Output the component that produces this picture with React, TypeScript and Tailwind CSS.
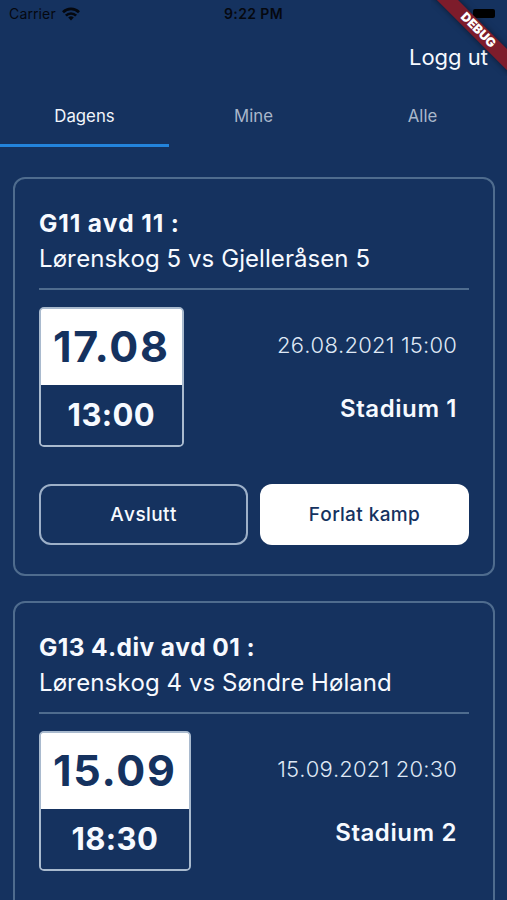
interface Match {
  id: number;
  league: string;
  leagueTracking: string;
  teams: string;
  day: string;
  meetTime: string;
  kickoff: string;
  arena: string;
}

const matches: Match[] = [
  {
    id: 1,
    league: "G11 avd 11 :",
    leagueTracking: "tracking-[0.85px]",
    teams: "Lørenskog 5 vs Gjelleråsen 5",
    day: "17.08",
    meetTime: "13:00",
    kickoff: "26.08.2021 15:00",
    arena: "Stadium 1",
  },
  {
    id: 2,
    league: "G13 4.div avd 01 :",
    leagueTracking: "tracking-[0.38px]",
    teams: "Lørenskog 4 vs Søndre Høland",
    day: "15.09",
    meetTime: "18:30",
    kickoff: "15.09.2021 20:30",
    arena: "Stadium 2",
  },
];

const tabs = ["Dagens", "Mine", "Alle"];

function WifiIcon() {
  return (
    <svg width="18" height="14" viewBox="0 0 18 14" fill="none">
      <g stroke="#05080f" strokeWidth="2.7">
        <path d="M1 5.2a11.4 11.4 0 0 1 16 0" />
        <path d="M3.9 8.6a7.2 7.2 0 0 1 10.2 0" />
      </g>
      <path d="M6.2 10.6a4 4 0 0 1 5.6 0L9 13.4Z" fill="#05080f" />
    </svg>
  );
}

function StatusBar() {
  return (
    <div className="grid h-[27px] shrink-0 grid-cols-3 items-center px-[9px] text-[#05080f]">
      <div className="flex items-center gap-[6px]">
        <span className="text-[14px] tracking-[0.2px]">Carrier</span>
        <WifiIcon />
      </div>
      <span className="text-center text-[14px] font-semibold tracking-[0.4px]">
        9:22 PM
      </span>
      <div className="mr-[3px] h-[9px] w-[22px] justify-self-end rounded-[2px] bg-black" />
    </div>
  );
}

function DebugBanner() {
  return (
    <div className="pointer-events-none absolute top-0 right-0 h-[76px] w-[76px] overflow-hidden">
      <div className="absolute top-[22.5px] left-[-13px] flex h-[14.7px] w-[120px] rotate-45 items-center justify-center bg-[#7d1c2b] text-[12.5px] font-black text-white shadow-[0_0_6px_rgba(0,0,0,0.5)]">
        DEBUG
      </div>
    </div>
  );
}

function Tabs() {
  return (
    <nav className="grid shrink-0 grid-cols-3">
      {tabs.map((tab, i) => (
        <button
          key={tab}
          className={
            i === 0
              ? "h-[60px] border-b-[3px] border-[#2384dc] pt-[3px] text-[16.8px] text-[#f1f5fb]"
              : "h-[60px] border-b-[3px] border-transparent pt-[3px] text-[16.8px] text-[#a9b7cb]"
          }
        >
          {tab}
        </button>
      ))}
    </nav>
  );
}

function MatchCard({ match }: { match: Match }) {
  return (
    <article className="h-[399px] shrink-0 rounded-[12px] border-2 border-[#4f6c8e] px-6 pt-[26px]">
      <div className="border-b-2 border-[#4f6c8e] pb-[11px]">
        <h2
          className={`text-[24.5px] leading-[36px] font-bold ${match.leagueTracking}`}
        >
          {match.league}
        </h2>
        <p className="text-[24px] leading-[36px] tracking-[0.07px]">
          {match.teams}
        </p>
      </div>
      <div className="mt-[17px] flex justify-between pr-3">
        <div className="flex h-[140px] flex-col overflow-hidden rounded-[5px] border-2 border-[#a9bace] bg-[linear-gradient(#fff_50%,#15325f_50%)] text-center font-bold">
          <div className="-mx-px -mt-px flex h-[77px] items-center bg-white px-[13px] text-[43px] tracking-[1.7px] text-[#15325f] [font-kerning:normal]">
            {match.day}
          </div>
          <div className="flex flex-1 items-center justify-center bg-[#15325f] text-[31px] tracking-[0.4px]">
            {match.meetTime}
          </div>
        </div>
        <div className="flex flex-col items-end pt-[20px]">
          <span className="text-[22px] leading-[36px] font-light tracking-[0.2px] text-[#dfe8f5]">
            {match.kickoff}
          </span>
          <span className="mt-[28px] text-[24px] leading-[36px] font-semibold tracking-[0.6px]">
            {match.arena}
          </span>
        </div>
      </div>
      <div className="mt-[37px] grid grid-cols-2 gap-3 text-[19px] font-medium tracking-[0.4px]">
        <button className="h-[61px] rounded-[12px] border-2 border-[#9db0c8] pt-[2px]">
          Avslutt
        </button>
        <button className="h-[61px] rounded-[12px] bg-white pt-[2px] text-[#15325f]">
          Forlat kamp
        </button>
      </div>
    </article>
  );
}

function App() {
  return (
    <main className="relative flex h-[900px] w-[507px] flex-col overflow-hidden bg-[#15325f] font-['Inter',sans-serif] text-[#f7faff] [font-kerning:none]">
      <StatusBar />
      <header className="flex h-[60px] shrink-0 items-center justify-end pr-[19px] text-[22px]">
        <button>Logg ut</button>
      </header>
      <Tabs />
      <section className="flex flex-col gap-[25px] pt-[30px] pr-3 pl-[13px]">
        {matches.map((match) => (
          <MatchCard key={match.id} match={match} />
        ))}
      </section>
      <DebugBanner />
    </main>
  );
}

export default App;
